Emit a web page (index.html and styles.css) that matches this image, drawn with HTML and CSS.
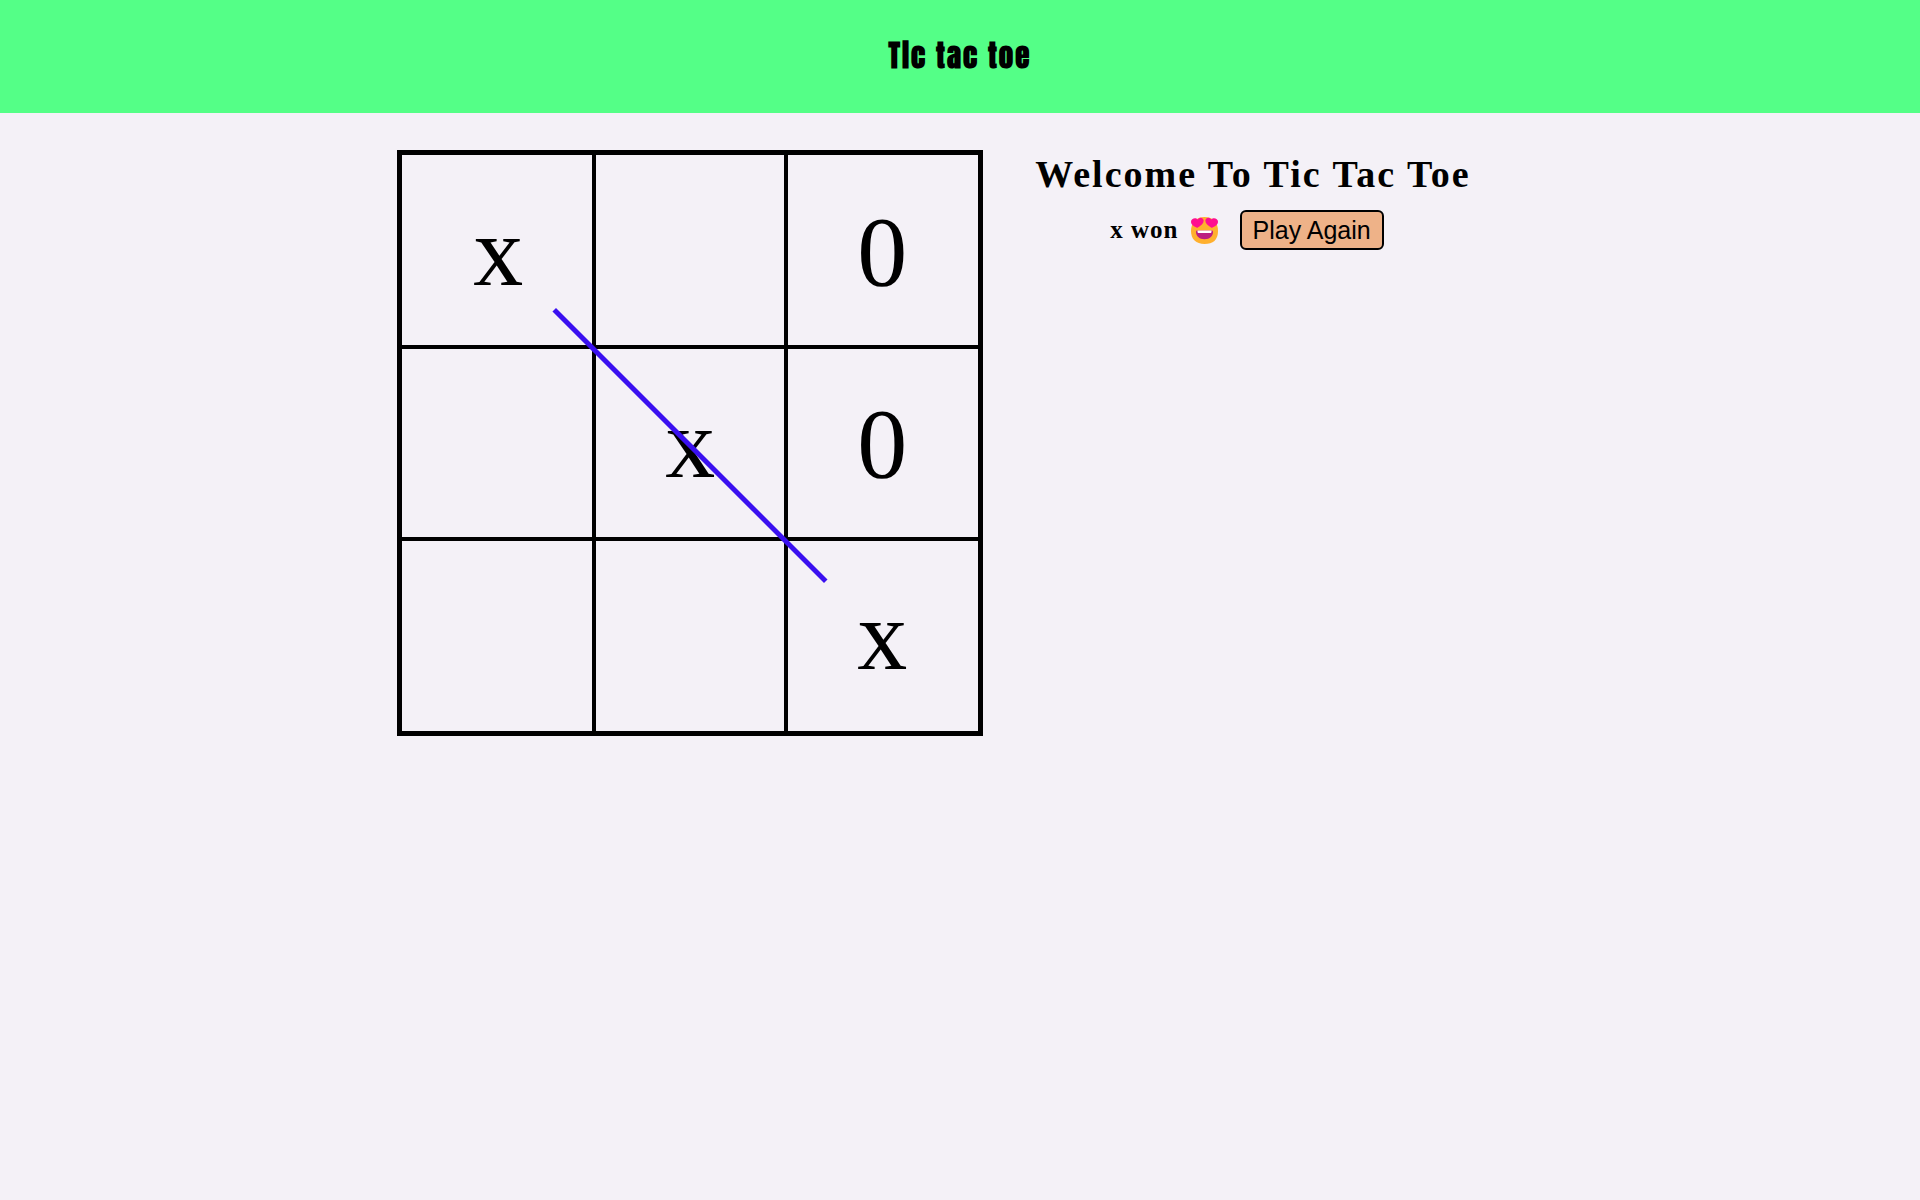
FILE: index.html
```html
<!DOCTYPE html>
<html lang="en">
<head>
<meta charset="utf-8">
<title>Tic tac toe</title>
<link rel="stylesheet" href="styles.css">
</head>
<body>
<header class="navbar">Tic tac toe</header>
<main class="game">
  <div class="board">
    <div class="box">x</div>
    <div class="box"></div>
    <div class="box">0</div>
    <div class="box"></div>
    <div class="box">x</div>
    <div class="box">0</div>
    <div class="box"></div>
    <div class="box"></div>
    <div class="box">x</div>
    <div class="win-line"></div>
  </div>
  <section class="info">
    <h1 class="welcome">Welcome To Tic Tac Toe</h1>
    <div class="status">
      <span class="result">x won</span>
      <svg class="emoji" viewBox="0 0 27 27" role="img" aria-label="Smiling face with heart eyes">
        <path fill="#ffb02e" d="M13.500 0C22 0 27 5 27 14S22 27 13.500 27 0 22 0 14 5 0 13.500 0z"/>
        <path fill="#bb1d80" d="M5 15c0-1 .6-1.400 1.500-1.400h14c.9 0 1.500.4 1.500 1.400 0 4-3 7.200-8.500 7.200S5 19 5 15z"/>
        <path fill="#fff" d="M6.500 13.600h14v1.200c0 .9-.5 1.300-1.300 1.300H7.800c-.8 0-1.300-.4-1.300-1.300z"/>
        <path fill="#ff0f8f" d="M6.800 2.400C8.300-.2 12.200.3 12.600 3.200c.5 3-2.500 5.300-5.700 7.300-.5.300-.9.300-1.400 0C2.800 9.100 0 7.700 0 4.700 0 1.400 4.600-.1 6.800 2.400z"/>
        <path fill="#ff0f8f" d="M20.200 2.400C18.700-.2 14.800.3 14.400 3.200c-.5 3 2.500 5.300 5.700 7.300.5.300.9.300 1.400 0C24.200 9.100 27 7.700 27 4.700c0-3.300-4.600-4.800-6.800-2.300z"/>
      </svg>
      <button class="reset" type="button">Play Again</button>
    </div>
  </section>
</main>
</body>
</html>
```
FILE: styles.css
```css
* {
  box-sizing: border-box;
}

body {
  margin: 0;
  background: #f4f1f7;
  color: #000;
  font-family: "Liberation Serif", "Times New Roman", serif;
}

.navbar {
  padding: 32px;
  background: #54ff87;
  font: bold 29px/49px Impact, Anton, "Liberation Sans Narrow", "Liberation Sans", sans-serif;
  letter-spacing: 2px;
  text-align: center;
}

.game {
  display: flex;
  justify-content: center;
  align-items: flex-start;
  padding-top: 37px;
}

.board {
  position: relative;
  display: grid;
  grid-template-columns: repeat(3, 10vw);
  grid-template-rows: repeat(3, 10vw);
  border: 5px solid #000;
}

.box {
  display: flex;
  justify-content: center;
  align-items: center;
  font-size: 100px;
  box-shadow: 0 0 0 2px #000;
}

.win-line {
  position: absolute;
  top: 50%;
  left: calc(50% - 10vw);
  width: 20vw;
  height: 5px;
  background: #3a10f0;
  transform: rotate(45deg);
}

.info {
  padding: 0 52px;
}

.welcome {
  margin: 0;
  font-size: 38px;
  line-height: 48px;
  letter-spacing: 2px;
}

.status {
  display: flex;
  justify-content: center;
  align-items: center;
  margin: 12px 12px 0 0;
}

.result {
  font-size: 25px;
  font-weight: bold;
  letter-spacing: 1px;
}

.emoji {
  width: 27px;
  height: 27px;
  margin: 0 22px 0 12px;
}

.reset {
  height: 40px;
  padding: 0 11px;
  border: 2px solid #000;
  border-radius: 6px;
  background: #eeb288;
  color: #000;
  font: 25px "Liberation Sans", Arial, sans-serif;
}
```
